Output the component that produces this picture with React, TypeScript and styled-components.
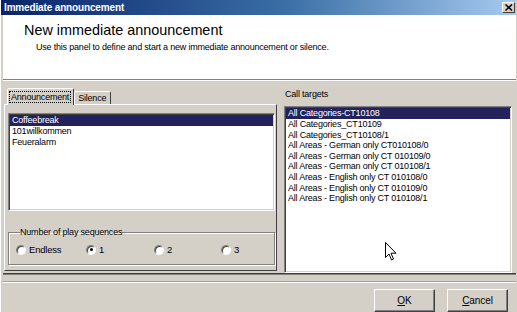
import { createGlobalStyle, styled } from "styled-components";

const GlobalStyle = createGlobalStyle`
    html, body {
        margin: 0;
        padding: 0;
        overflow: hidden;
        background: #d4d0c8;
    }
`;

const Window = styled.div`
    position: relative;
    display: flex;
    flex-direction: column;
    width: 517px;
    height: 312px;
    padding: 0 1px 0 2px;
    box-sizing: border-box;
    border-left: 1px solid #ffffff;
    background: #d4d0c8;
    font-family: "Liberation Sans", Arial, sans-serif;
    color: #000;
    overflow: hidden;
`;

const TitleBar = styled.div`
    display: flex;
    align-items: center;
    justify-content: space-between;
    height: 15px;
    margin-left: -2px;
    padding: 0 1px 0 3px;
    background: linear-gradient(90deg, #0a246a 0%, #3a6ea5 55%, #a6caf0 100%);
    color: #fff;
    font-size: 10px;
    font-weight: 700;
    letter-spacing: -0.15px;
`;

const CloseButton = styled.div`
    display: flex;
    align-items: center;
    justify-content: center;
    width: 13px;
    height: 11px;
    box-sizing: border-box;
    border: 1px solid;
    border-color: #fff #404040 #404040 #fff;
    background: #d4d0c8;
`;

const Header = styled.div`
    height: 65px;
    padding: 7px 0 0 21px;
    box-sizing: border-box;
    background: #fff;
`;

const HeaderTitle = styled.div`
    font-size: 14.4px;
    line-height: 16px;
`;

const HeaderText = styled.div`
    margin: 4px 0 0 12px;
    font-size: 9px;
    letter-spacing: -0.2px;
    line-height: 11px;
`;

const Etched = styled.div<{ $dark?: boolean }>`
    height: 0;
    border-top: 1px solid ${(p) => (p.$dark ? "#404040" : "#808080")};
    border-bottom: 1px solid ${(p) => (p.$dark ? "#808080" : "#ffffff")};
`;

const Body = styled.div`
    display: flex;
    gap: 7px;
    height: 193px;
    padding: 6px 4px 0 1px;
    box-sizing: border-box;
`;

const LeftColumn = styled.div`
    display: flex;
    flex-direction: column;
    width: 273px;
    padding-bottom: 2px;
`;

const TabStrip = styled.div`
    display: flex;
    align-items: flex-end;
    height: 17px;
    padding-left: 3px;
`;

const Tab = styled.div<{ $active?: boolean }>`
    display: flex;
    align-items: center;
    height: ${(p) => (p.$active ? 17 : 13)}px;
    padding: 0 3px 0 2px;
    margin-bottom: ${(p) => (p.$active ? -1 : 0)}px;
    box-sizing: border-box;
    border: 1px solid;
    border-bottom: none;
    border-color: #fff #404040 transparent #fff;
    border-radius: 2px 2px 0 0;
    background: #d4d0c8;
    font-size: 9px;
    letter-spacing: -0.2px;
    position: relative;
    z-index: ${(p) => (p.$active ? 1 : 0)};
`;

const FocusLabel = styled.span<{ $focus?: boolean }>`
    padding: 0 1px;
    outline: ${(p) => (p.$focus ? "1px dotted #000" : "none")};
`;

const TabPage = styled.div`
    flex: 1;
    display: flex;
    flex-direction: column;
    padding: 8px 1px 0 3px;
    border: 1px solid;
    border-color: #fff #404040 #404040 #fff;
`;

const ListBox = styled.div<{ $grow?: boolean }>`
    position: relative;
    ${(p) => (p.$grow ? "flex: 1;" : "height: 98px;")}
    padding: 1px;
    box-sizing: border-box;
    border: 1px solid;
    border-color: #808080 #fff #fff #808080;
    box-shadow: inset 1px 1px 0 #404040, inset -1px -1px 0 #d4d0c8;
    background: #fff;
    font-size: 9px;
    letter-spacing: -0.2px;
`;

const ListRow = styled.div<{ $selected?: boolean }>`
    height: 10.6px;
    line-height: 10.6px;
    padding-left: 2px;
    white-space: nowrap;
    background: ${(p) => (p.$selected ? "#23225a" : "transparent")};
    color: ${(p) => (p.$selected ? "#fff" : "#000")};
`;

const GroupBox = styled.fieldset`
    height: 37px;
    margin: 17px 0 0 0;
    padding: 0 0 0 7px;
    box-sizing: border-box;
    border: 1px solid #808080;
    box-shadow: 1px 1px 0 #fff, inset 1px 1px 0 #fff;
`;

const Legend = styled.legend`
    margin-left: 4px;
    padding: 0;
    font-size: 9px;
    letter-spacing: -0.2px;
    line-height: 9px;
`;

const RadioRow = styled.div`
    display: grid;
    grid-template-columns: 70px 68px 67px 1fr;
    align-items: center;
    margin-top: 7px;
`;

const RadioOption = styled.label`
    display: flex;
    align-items: center;
    gap: 3px;
    font-size: 9.5px;
    letter-spacing: -0.2px;
`;

const RadioDot = styled.span<{ $checked?: boolean }>`
    position: relative;
    width: 10px;
    height: 10px;
    box-sizing: border-box;
    border-radius: 50%;
    border: 1px solid;
    border-color: #808080 #fff #fff #808080;
    box-shadow: inset 1px 1px 0 #404040;
    background: #fff;
    &::after {
        content: "";
        position: absolute;
        left: 2.5px;
        top: 2.5px;
        width: 3px;
        height: 3px;
        border-radius: 50%;
        background: ${(p) => (p.$checked ? "#000" : "transparent")};
    }
`;

const RightColumn = styled.div`
    flex: 1;
    display: flex;
    flex-direction: column;
`;

const FieldLabel = styled.div`
    height: 19px;
    padding: 2px 0 0 1px;
    box-sizing: border-box;
    font-size: 9px;
    letter-spacing: -0.2px;
`;

const Cursor = styled.svg`
    position: absolute;
    left: 100px;
    top: 135px;
`;

const Footer = styled.div`
    display: flex;
    justify-content: flex-end;
    gap: 12px;
    margin-top: 7px;
    padding: 0 8px 0 0;
    border-top: 1px solid #fff;
    box-shadow: 0 -1px 0 #a0a0a0;
`;

const Button = styled.div`
    display: flex;
    align-items: center;
    justify-content: center;
    width: 61px;
    height: 23px;
    margin-top: 6px;
    box-sizing: border-box;
    border: 1px solid;
    border-color: #fff #404040 #404040 #fff;
    box-shadow: inset -1px -1px 0 #808080;
    font-size: 10px;
    letter-spacing: -0.1px;
    u {
        text-decoration: underline;
    }
`;

const announcements = ["Coffeebreak", "101willkommen", "Feueralarm"];

const targets = [
    "All Categories-CT10108",
    "All Categories_CT10109",
    "All Categories_CT10108/1",
    "All Areas - German only CT010108/0",
    "All Areas - German only  CT 010109/0",
    "All Areas - German only CT 010108/1",
    "All Areas - English only CT 010108/0",
    "All Areas - English only CT 010109/0",
    "All Areas - English only CT 010108/1",
];

const sequences = ["Endless", "1", "2", "3"];

export default function App() {
    return (
        <>
            <GlobalStyle />
            <Window>
                <TitleBar>
                    <span>Immediate announcement</span>
                    <CloseButton>
                        <svg width="8" height="7" viewBox="0 0 8 7">
                            <path d="M0.5 0.5 L7 6.5 M7 0.5 L0.5 6.5" stroke="#000" strokeWidth="1.5" />
                        </svg>
                    </CloseButton>
                </TitleBar>
                <Header>
                    <HeaderTitle>New immediate announcement</HeaderTitle>
                    <HeaderText>Use this panel to define and start a new immediate announcement or silence.</HeaderText>
                </Header>
                <Etched />
                <Body>
                    <LeftColumn>
                        <TabStrip>
                            <Tab $active>
                                <FocusLabel $focus>Announcement</FocusLabel>
                            </Tab>
                            <Tab>
                                <FocusLabel>Silence</FocusLabel>
                            </Tab>
                        </TabStrip>
                        <TabPage>
                            <ListBox>
                                {announcements.map((item, i) => (
                                    <ListRow key={item} $selected={i === 0}>
                                        {item}
                                    </ListRow>
                                ))}
                            </ListBox>
                            <GroupBox>
                                <Legend>Number of play sequences</Legend>
                                <RadioRow>
                                    {sequences.map((s) => (
                                        <RadioOption key={s}>
                                            <RadioDot $checked={s === "1"} />
                                            {s}
                                        </RadioOption>
                                    ))}
                                </RadioRow>
                            </GroupBox>
                        </TabPage>
                    </LeftColumn>
                    <RightColumn>
                        <FieldLabel>Call targets</FieldLabel>
                        <ListBox $grow>
                            {targets.map((t, i) => (
                                <ListRow key={t} $selected={i === 0}>
                                    {t}
                                </ListRow>
                            ))}
                            <Cursor width="12" height="19" viewBox="0 0 12 19">
                                <path
                                    d="M0.5 0.5 L0.5 15.5 L4 12 L6.5 18 L8.5 17 L6 11.2 L11 11.2 Z"
                                    fill="#fff"
                                    stroke="#000"
                                    strokeWidth="1"
                                    strokeLinejoin="miter"
                                />
                            </Cursor>
                        </ListBox>
                    </RightColumn>
                </Body>
                <Etched $dark />
                <Footer>
                    <Button>
                        <span>
                            <u>O</u>K
                        </span>
                    </Button>
                    <Button>
                        <span>
                            <u>C</u>ancel
                        </span>
                    </Button>
                </Footer>
            </Window>
        </>
    );
}
